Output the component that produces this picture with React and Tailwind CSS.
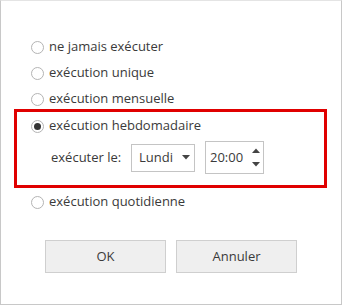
import React, { useState } from 'react';

const options = [
  { id: 'never', label: 'ne jamais exécuter' },
  { id: 'once', label: 'exécution unique' },
  { id: 'monthly', label: 'exécution mensuelle' },
];

function Radio({ checked }) {
  return (
    <span className="w-[13px] h-[13px] rounded-full border border-[#b4b4b4] bg-white flex items-center justify-center shrink-0">
      {checked && <span className="w-[7px] h-[7px] rounded-full bg-[#333333]" />}
    </span>
  );
}

function OptionRow({ label, checked, onClick }) {
  return (
    <div className="h-[26px] flex items-center gap-[5px] cursor-default" onClick={onClick}>
      <Radio checked={checked} />
      <span>{label}</span>
    </div>
  );
}

export default function App() {
  const [mode, setMode] = useState('weekly');

  return (
    <div
      className="w-[342px] h-[305px] bg-white border border-[#c8c8c8] border-t-[#e4e4e4] text-[13px] text-[#3a3a3a] flex flex-col"
      style={{ fontFamily: '"Open Sans", "Noto Sans", sans-serif' }}
    >
      <div className="pt-[33px] pl-[30px]">
        {options.map((o) => (
          <OptionRow key={o.id} label={o.label} checked={mode === o.id} onClick={() => setMode(o.id)} />
        ))}
      </div>

      {/* highlighted weekly block */}
      <div className="ml-[13px] w-[313px] -mt-[3px] border-[3px] border-[#e00000] pl-[14px] pt-px pb-[11px]">
        <OptionRow label="exécution hebdomadaire" checked={mode === 'weekly'} onClick={() => setMode('weekly')} />
        <div className="mt-[2px] flex items-center">
          <span className="pl-[20px] w-[100px]">exécuter le:</span>
          <div className="w-[64px] h-[28px] border border-[#c4c4c4] flex items-center justify-between pl-[7px] pr-[4px]">
            <span>Lundi</span>
            <svg width="8" height="5" viewBox="0 0 8 5">
              <path d="M0 0 L8 0 L4 4.5 Z" fill="#444" />
            </svg>
          </div>
          <div className="ml-[10px] w-[59px] h-[33px] border border-[#c4c4c4] flex items-center justify-between pl-[4px] pr-[3px]">
            <span>20:00</span>
            <div className="flex flex-col gap-[9px]">
              <svg width="8" height="5" viewBox="0 0 8 5">
                <path d="M0 5 L8 5 L4 0.5 Z" fill="#444" />
              </svg>
              <svg width="8" height="5" viewBox="0 0 8 5">
                <path d="M0 0 L8 0 L4 4.5 Z" fill="#444" />
              </svg>
            </div>
          </div>
        </div>
      </div>

      <div className="pl-[30px] mt-px">
        <OptionRow label="exécution quotidienne" checked={mode === 'daily'} onClick={() => setMode('daily')} />
      </div>

      <div className="mt-[25px] flex justify-center gap-[10px]">
        <button className="w-[121px] h-[33px] bg-[#efefef] border border-[#cfcfcf] text-[#3a3a3a]">OK</button>
        <button className="w-[121px] h-[33px] bg-[#efefef] border border-[#cfcfcf] text-[#3a3a3a]">Annuler</button>
      </div>
    </div>
  );
}
